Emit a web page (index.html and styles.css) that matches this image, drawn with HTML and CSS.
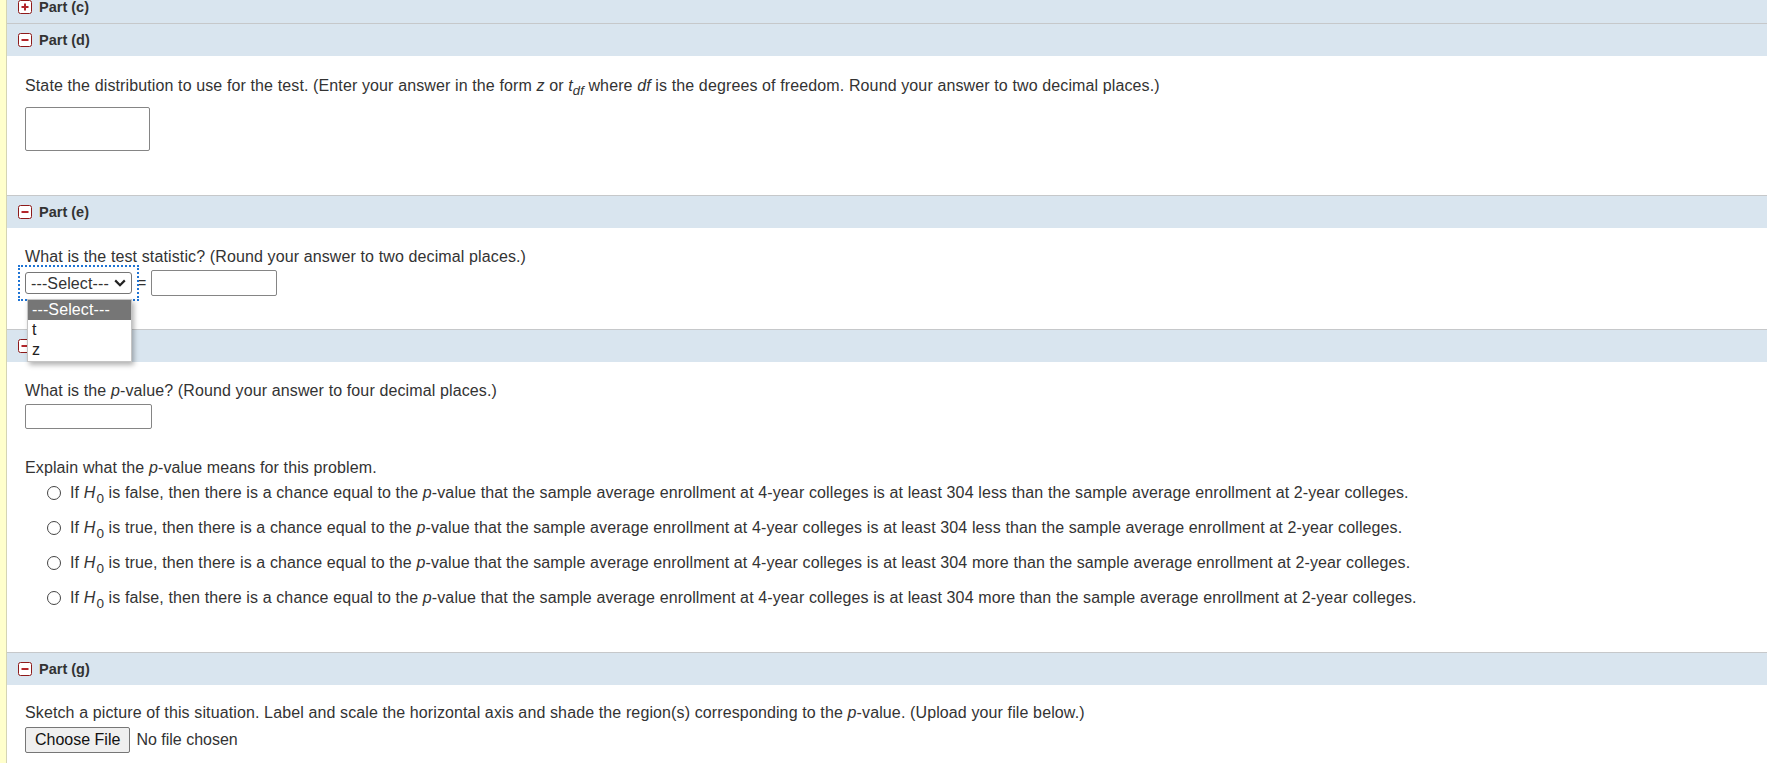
FILE: index.html
```html
<!DOCTYPE html>
<html lang="en">
<head>
    <meta charset="UTF-8">
    <meta name="viewport" content="width=device-width, initial-scale=1.0">
    <title>Hypothesis Test – Parts (c) to (g)</title>
    <link rel="stylesheet" href="styles.css">
</head>
<body>
    <div class="page">
        <div class="margin-strip"></div>
        <div class="parts">

            <div class="part-head first">
                <svg class="toggle" width="14" height="14" viewBox="0 0 14 14">
                    <rect x="0.5" y="0.5" width="13" height="13" rx="2" fill="#fff" stroke="#8e1a1a"/>
                    <rect x="3.5" y="6" width="7" height="2" fill="#b3262b"/>
                    <rect x="6" y="3.5" width="2" height="7" fill="#b3262b"/>
                </svg>
                <span>Part (c)</span>
            </div>

            <div class="part-head">
                <svg class="toggle" width="14" height="14" viewBox="0 0 14 14">
                    <rect x="0.5" y="0.5" width="13" height="13" rx="2" fill="#fff" stroke="#8e1a1a"/>
                    <rect x="3.5" y="6" width="7" height="2" fill="#b3262b"/>
                </svg>
                <span>Part (d)</span>
            </div>
            <div class="part-body part-d">
                <p>State the distribution to use for the test. (Enter your answer in the form <i>z</i> or <i>t<sub class="df">df</sub></i> where <i>df</i> is the degrees of freedom. Round your answer to two decimal places.)</p>
                <input type="text" class="answer answer-tall">
            </div>

            <div class="part-head">
                <svg class="toggle" width="14" height="14" viewBox="0 0 14 14">
                    <rect x="0.5" y="0.5" width="13" height="13" rx="2" fill="#fff" stroke="#8e1a1a"/>
                    <rect x="3.5" y="6" width="7" height="2" fill="#b3262b"/>
                </svg>
                <span>Part (e)</span>
            </div>
            <div class="part-body part-e">
                <p>What is the test statistic? (Round your answer to two decimal places.)</p>
                <div class="stat-row">
                    <span class="select-wrap">
                        <select class="dist-select">
                            <option>---Select---</option>
                            <option>t</option>
                            <option>z</option>
                        </select>
                        <svg class="chevron" width="12" height="8" viewBox="0 0 12 8">
                            <path d="M1.2 1.4 L6 6.2 L10.8 1.4" fill="none" stroke="#222" stroke-width="2.2"/>
                        </svg>
                        <div class="dropdown">
                            <div class="dropdown-item active">---Select---</div>
                            <div class="dropdown-item">t</div>
                            <div class="dropdown-item last">z</div>
                        </div>
                    </span>
                    <span class="equals">=</span>
                    <input type="text" class="answer answer-stat">
                </div>
            </div>

            <div class="part-head">
                <svg class="toggle" width="14" height="14" viewBox="0 0 14 14">
                    <rect x="0.5" y="0.5" width="13" height="13" rx="2" fill="#fff" stroke="#8e1a1a"/>
                    <rect x="3.5" y="6" width="7" height="2" fill="#b3262b"/>
                </svg>
                <span>Part (f)</span>
            </div>
            <div class="part-body part-f">
                <p>What is the <i>p</i>-value? (Round your answer to four decimal places.)</p>
                <input type="text" class="answer answer-p">
                <p class="explain">Explain what the <i>p</i>-value means for this problem.</p>
                <ul class="choices">
                    <li><label><input type="radio" name="pmeaning"><span>If <i>H</i><sub class="h0">0</sub> is false, then there is a chance equal to the <i>p</i>-value that the sample average enrollment at 4-year colleges is at least 304 less than the sample average enrollment at 2-year colleges.</span></label></li>
                    <li><label><input type="radio" name="pmeaning"><span>If <i>H</i><sub class="h0">0</sub> is true, then there is a chance equal to the <i>p</i>-value that the sample average enrollment at 4-year colleges is at least 304 less than the sample average enrollment at 2-year colleges.</span></label></li>
                    <li><label><input type="radio" name="pmeaning"><span>If <i>H</i><sub class="h0">0</sub> is true, then there is a chance equal to the <i>p</i>-value that the sample average enrollment at 4-year colleges is at least 304 more than the sample average enrollment at 2-year colleges.</span></label></li>
                    <li><label><input type="radio" name="pmeaning"><span>If <i>H</i><sub class="h0">0</sub> is false, then there is a chance equal to the <i>p</i>-value that the sample average enrollment at 4-year colleges is at least 304 more than the sample average enrollment at 2-year colleges.</span></label></li>
                </ul>
            </div>

            <div class="part-head">
                <svg class="toggle" width="14" height="14" viewBox="0 0 14 14">
                    <rect x="0.5" y="0.5" width="13" height="13" rx="2" fill="#fff" stroke="#8e1a1a"/>
                    <rect x="3.5" y="6" width="7" height="2" fill="#b3262b"/>
                </svg>
                <span>Part (g)</span>
            </div>
            <div class="part-body part-g">
                <p>Sketch a picture of this situation. Label and scale the horizontal axis and shade the region(s) corresponding to the <i>p</i>-value. (Upload your file below.)</p>
                <input type="file" class="upload">
            </div>

        </div>
    </div>
</body>
</html>
```

FILE: styles.css
```css
* {
    box-sizing: border-box;
}

body {
    margin: 0;
    font-family: "Liberation Sans", Arial, sans-serif;
    font-size: 16px;
    color: #333;
    background: #fff;
    overflow: hidden;
}

.page {
    display: flex;
    min-height: 100vh;
}

.margin-strip {
    width: 7px;
    flex: none;
    background: #ffffcc;
    border-right: 1px solid #d4d4b4;
}

.parts {
    flex: 1;
}

.part-head {
    display: flex;
    align-items: center;
    gap: 7px;
    height: 33px;
    padding-left: 11px;
    background: #d9e5ef;
    border-top: 1px solid #c6c8ca;
    font-size: 14.5px;
    font-weight: bold;
    color: #333;
}

.part-head.first {
    margin-top: -10px;
}

.toggle {
    flex: none;
}

.part-body {
    padding: 20px 18px 0;
    letter-spacing: 0.12px;
}

.part-body p {
    margin: 0;
    line-height: 18px;
}

sub {
    line-height: 0;
}

.h0 {
    font-style: normal;
    font-size: 13.5px;
    vertical-align: -5px;
    margin-left: 1px;
}

.df {
    font-size: 13px;
    vertical-align: -4px;
}

.answer {
    display: block;
    border: 1px solid #858585;
    border-radius: 2px;
    background: #fff;
    font: inherit;
    padding: 0 4px;
}

/* part (d) */
.part-d {
    padding-top: 21px;
    padding-bottom: 44px;
}

.answer-tall {
    width: 125px;
    height: 44px;
    margin-top: 12px;
}

/* part (e) */
.part-e {
    padding-bottom: 33px;
}

.stat-row {
    display: flex;
    align-items: center;
    height: 26px;
    margin-top: 4px;
}

.select-wrap {
    position: relative;
    display: inline-block;
    height: 22px;
    outline: 2px dotted #1f74d4;
    outline-offset: 5px;
}

.dist-select {
    appearance: none;
    display: block;
    width: 107px;
    height: 22px;
    font-family: "Liberation Sans", Arial, sans-serif;
    font-size: 16px;
    letter-spacing: 0.12px;
    color: #333;
    border: 1px solid #767676;
    border-radius: 3px;
    background: #fff;
    padding: 0 0 0 5px;
}

.chevron {
    position: absolute;
    right: 6px;
    top: 7px;
    pointer-events: none;
}

.dropdown {
    position: absolute;
    top: 27px;
    left: 2px;
    width: 105px;
    z-index: 5;
    background: #fff;
    border: 1px solid #c4c4c4;
    box-shadow: 2px 3px 5px rgba(0, 0, 0, 0.3);
    font-size: 16px;
    color: #222;
}

.dropdown-item {
    height: 20px;
    line-height: 20px;
    padding: 0 4px;
}

.dropdown-item.active {
    background: #767676;
    color: #fff;
}

.dropdown-item.last {
    height: 21px;
}

.equals {
    margin: 0 5px;
}

.answer-stat {
    width: 126px;
    height: 26px;
}

/* part (f) */
.part-f {
    padding-bottom: 45px;
}

.answer-p {
    width: 127px;
    height: 25px;
    margin-top: 4px;
}

.part-body p.explain {
    margin-top: 30px;
}

.choices {
    list-style: none;
    margin: 7px 0 0;
    padding: 0 0 0 22px;
}

.choices li {
    line-height: 18px;
    margin-bottom: 17px;
}

.choices li:last-child {
    margin-bottom: 0;
}

.choices label {
    display: flex;
    align-items: center;
    white-space: nowrap;
}

.choices input[type="radio"] {
    appearance: none;
    width: 14px;
    height: 14px;
    margin: 0 9px 0 0;
    border: 1px solid #444;
    border-radius: 50%;
    background: #fff;
    flex: none;
}

/* part (g) */
.part-g {
    padding-top: 19px;
}

.upload {
    display: block;
    margin-top: 5px;
    font-family: "Liberation Sans", Arial, sans-serif;
    font-size: 16px;
    color: #333;
}

.upload::file-selector-button {
    height: 26px;
    padding: 0 9px;
    margin-right: 6px;
    font: inherit;
    color: #111;
    background: #efefef;
    border: 1px solid #767676;
    border-radius: 2px;
}
```
